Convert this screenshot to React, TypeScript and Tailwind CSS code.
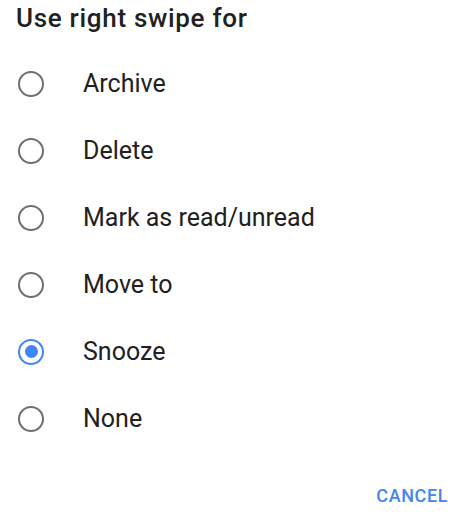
import { useState } from "react";

const options = ["Archive", "Delete", "Mark as read/unread", "Move to", "Snooze", "None"];

export default function App() {
  const [selected, setSelected] = useState("Snooze");

  return (
    <div className="w-[461px] h-[523px] bg-white font-['Roboto',sans-serif] text-[#212121]">
      <h2 className="pl-4 pt-[1px] text-[26px] leading-[34px] font-medium tracking-[0.7px]">Use right swipe for</h2>
      <div className="mt-[15px] flex flex-col">
        {options.map((opt) => {
          const on = opt === selected;
          return (
            <button
              key={opt}
              onClick={() => setSelected(opt)}
              className="flex items-center h-[67px] pl-[18px] text-left"
            >
              <span
                className={`w-[26px] h-[26px] rounded-full border-[2.5px] flex items-center justify-center ${
                  on ? "border-[#4285f4]" : "border-[#6f6f6f]"
                }`}
              >
                {on && <span className="w-[13px] h-[13px] rounded-full bg-[#4285f4]" />}
              </span>
              <span className="ml-[39px] text-[25px] leading-[30px]">{opt}</span>
            </button>
          );
        })}
      </div>
      <div className="flex justify-end pr-[13px] mt-[32px]">
        <button className="text-[18px] leading-[24px] font-medium tracking-[0.6px] text-[#4285f4]">CANCEL</button>
      </div>
    </div>
  );
}
